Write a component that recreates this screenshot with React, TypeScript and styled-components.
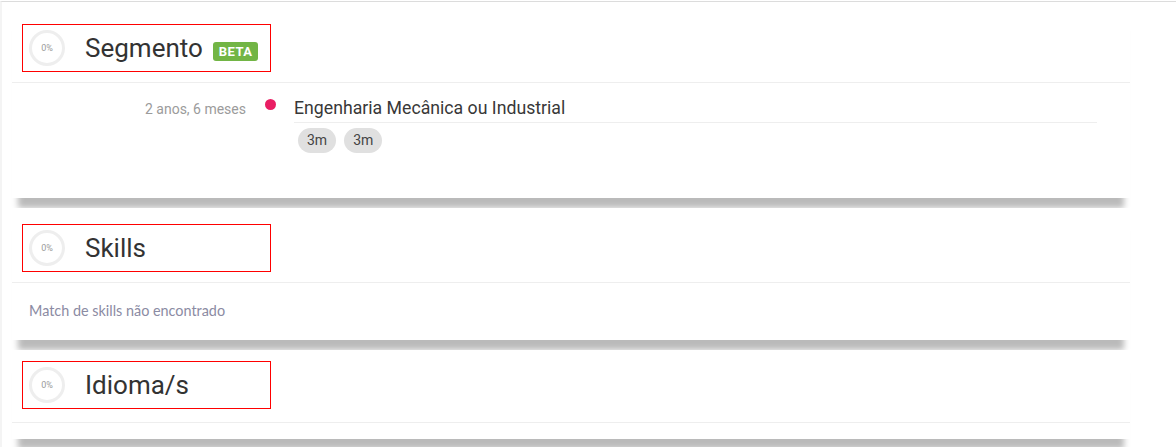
import React from "react";
import styled, { createGlobalStyle } from "styled-components";

const GlobalStyle = createGlobalStyle`
  html, body { margin: 0; padding: 0; background: #fff; }
  body { font-family: Roboto, "Liberation Sans", Arial, sans-serif; }
  * { box-sizing: border-box; }
`;

const Page = styled.div`
  margin-top: 1px;
  border-top: 1px solid #dcdcdc;
  border-left: 2px solid #f4f4f4;
  padding: 6px 46px 0 10px;
  display: flex;
  flex-direction: column;
  gap: 10px;
  min-height: 446px;
`;

const Card = styled.section`
  background: #fff;
  box-shadow: 0 16px 6px -6px rgba(0, 0, 0, 0.27);
`;

const Header = styled.div<{ $top: number; $height: number }>`
  height: ${(p) => p.$height}px;
  padding: ${(p) => p.$top}px 0 0 10px;
  border-bottom: 1px solid #eeeeee;
`;

const Marked = styled.div`
  width: 249px;
  height: 48px;
  border: 1px solid #ff0000;
  display: flex;
  align-items: center;
  padding-left: 6px;
`;

const Progress = styled.div`
  width: 36px;
  height: 36px;
  border-radius: 50%;
  border: 3px solid #eeeeee;
  display: flex;
  align-items: center;
  justify-content: center;
  font-size: 9px;
  color: #9a9a9a;
  flex-shrink: 0;
`;

const Title = styled.h2`
  margin: 0 0 0 20px;
  font-size: 26px;
  font-weight: 400;
  color: #333;
  line-height: 30px;
`;

const Badge = styled.span`
  margin-left: 10px;
  margin-top: 6px;
  background: #72b545;
  color: #fff;
  font-size: 13px;
  font-weight: 700;
  letter-spacing: 0.4px;
  border-radius: 3px;
  padding: 1px 6px;
  line-height: 17px;
`;

const SegmentBody = styled.div`
  display: grid;
  grid-template-columns: 234px 48px 1fr;
  padding: 14px 33px 45px 0;
`;

const Period = styled.div`
  text-align: right;
  font-size: 14px;
  color: #9b9b9b;
  line-height: 22px;
  padding-top: 1px;
`;

const DotCell = styled.div`
  display: flex;
  justify-content: center;
  padding-top: 2px;
`;

const Dot = styled.span`
  width: 11px;
  height: 11px;
  border-radius: 50%;
  background: #e91e63;
`;

const Area = styled.div`
  display: flex;
  flex-direction: column;
`;

const AreaName = styled.div`
  font-size: 17.7px;
  color: #383838;
  line-height: 22px;
  padding-bottom: 3px;
  border-bottom: 1px solid #eeeeee;
`;

const Chips = styled.div`
  display: flex;
  gap: 8px;
  margin-top: 5px;
  padding-left: 4px;
`;

const Chip = styled.span`
  background: #e0e0e0;
  color: #444;
  font-size: 14px;
  height: 25px;
  line-height: 25px;
  padding: 0 9px;
  border-radius: 13px;
`;

const EmptyText = styled.p`
  margin: 0;
  padding: 19px 17px 20px;
  font-family: Lato, "Open Sans", sans-serif;
  font-size: 14.4px;
  line-height: 18px;
  color: #8b8ba3;
`;

const BlankBody = styled.div`
  height: 16px;
`;

export default function App() {
  return (
    <>
      <GlobalStyle />
      <Page>
        <Card>
          <Header $top={16} $height={75}>
            <Marked>
              <Progress>0%</Progress>
              <Title>Segmento</Title>
              <Badge>BETA</Badge>
            </Marked>
          </Header>
          <SegmentBody>
            <Period>2 anos, 6 meses</Period>
            <DotCell>
              <Dot />
            </DotCell>
            <Area>
              <AreaName>Engenharia Mecânica ou Industrial</AreaName>
              <Chips>
                <Chip>3m</Chip>
                <Chip>3m</Chip>
              </Chips>
            </Area>
          </SegmentBody>
        </Card>
        <Card>
          <Header $top={16} $height={75}>
            <Marked>
              <Progress>0%</Progress>
              <Title>Skills</Title>
            </Marked>
          </Header>
          <EmptyText>Match de skills não encontrado</EmptyText>
        </Card>
        <Card>
          <Header $top={11} $height={73}>
            <Marked>
              <Progress>0%</Progress>
              <Title>Idioma/s</Title>
            </Marked>
          </Header>
          <BlankBody />
        </Card>
      </Page>
    </>
  );
}
